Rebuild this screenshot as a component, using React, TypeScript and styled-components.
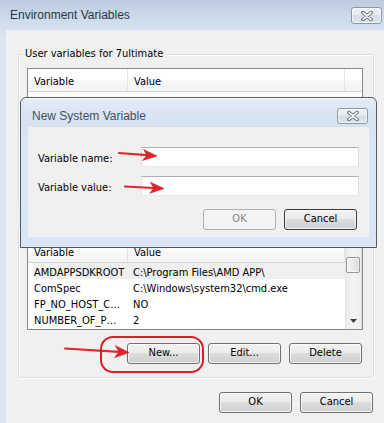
import React from "react";
import styled, { createGlobalStyle, css } from "styled-components";

const UI_FONT = `"DejaVu Sans Condensed", "Liberation Sans", Arial, sans-serif`;
const CAPTION_FONT = `"Liberation Sans", Arial, sans-serif`;

const GlobalStyle = createGlobalStyle`
  html, body { margin: 0; padding: 0; background: #dbe6f4; }
  body { font-family: ${UI_FONT}; font-size: 11px; }
  * { box-sizing: border-box; }
`;

const Window = styled.div`
  position: relative;
  width: 384px;
  height: 423px;
  overflow: hidden;
  background: linear-gradient(180deg, #bccbde 0px, #c9d7e7 14px, #d6e2f1 30px, #dbe6f4 40px);
  font-family: ${UI_FONT};
  font-size: 11px;
  color: #000;
`;

const TitleBar = styled.div`
  height: 30px;
  display: flex;
  justify-content: space-between;
  align-items: flex-start;
  padding: 0 2px 0 10px;
`;

const Caption = styled.div<{ $dialog?: boolean }>`
  font-family: ${CAPTION_FONT};
  font-size: 12px;
  line-height: 15px;
  margin-top: ${(p) => (p.$dialog ? 11 : 8)}px;
  color: ${(p) => (p.$dialog ? "#45505c" : "#273646")};
`;

const CloseBtn = styled.div<{ $h: number; $mt: number }>`
  width: 31px;
  height: ${(p) => p.$h}px;
  margin-top: ${(p) => p.$mt}px;
  border: 1px solid #8d99a9;
  border-radius: 3px;
  background: linear-gradient(180deg, #eef3f9 0%, #e2e9f2 50%, #d4dde9 50%, #dce4ef 100%);
  box-shadow: inset 0 0 0 1px rgba(255, 255, 255, 0.55);
  display: flex;
  align-items: center;
  justify-content: center;
`;

const Client = styled.div`
  margin-left: 6px;
  height: 393px;
  background: #f0f0f0;
  display: flex;
  flex-direction: column;
  padding: 24px 0 0 12px;
`;

const Group = styled.div<{ $h: number; $mt: number }>`
  position: relative;
  width: 356px;
  height: ${(p) => p.$h}px;
  margin-top: ${(p) => p.$mt}px;
  border: 1px solid #d5dfe5;
  border-radius: 3px;
  box-shadow: inset 1px 1px 0 #ffffff, 1px 1px 0 #ffffff;
  padding: 13px 10px 0 8px;
  display: flex;
  flex-direction: column;
`;

const GroupLabel = styled.span`
  position: absolute;
  top: -9px;
  left: 4px;
  padding: 0 2px;
  background: #f0f0f0;
  line-height: 15px;
`;

const List = styled.div<{ $h: number }>`
  height: ${(p) => p.$h}px;
  border: 1px solid #828790;
  background: #ffffff;
  display: flex;
  flex: none;
`;

const ListMain = styled.div`
  flex: 1;
  display: flex;
  flex-direction: column;
  overflow: hidden;
`;

const Header = styled.div`
  height: 23px;
  flex: none;
  display: flex;
  background: linear-gradient(180deg, #ffffff 0%, #ffffff 50%, #f7f8fa 50%, #f2f3f5 100%);
  border-bottom: 1px solid #d5d5d5;
`;

const HeadCell = styled.div<{ $w?: number }>`
  ${(p) =>
    p.$w
      ? css`
          width: ${p.$w}px;
          flex: none;
          border-right: 1px solid #e3e4e6;
        `
      : css`
          flex: 1;
        `}
  padding: 5px 0 0 6px;
  line-height: 15px;
  white-space: nowrap;
`;

const Row = styled.div<{ $sel?: boolean }>`
  display: flex;
  flex: none;
  height: 16px;
  margin-left: 5px;
  background: ${(p) => (p.$sel ? "#efefef" : "transparent")};
  white-space: nowrap;
`;

const Cell = styled.div<{ $w?: number; $pl: number }>`
  ${(p) => (p.$w ? `width: ${p.$w}px; flex: none;` : "flex: 1;")}
  padding: 3px 0 0 ${(p) => p.$pl}px;
  line-height: 14px;
  overflow: hidden;
`;

const ScrollBar = styled.div`
  width: 17px;
  flex: none;
  display: flex;
  flex-direction: column;
  background: linear-gradient(90deg, #e2e2e2 0, #ececec 2px, #f4f4f4 8px, #efefef 14px, #e4e4e4 17px);
`;

const ScrollArrow = styled.div`
  height: 17px;
  flex: none;
  display: flex;
  align-items: center;
  justify-content: center;
`;

const ScrollThumb = styled.div`
  height: 16px;
  flex: none;
  margin: 0 2px 0 1px;
  border: 1px solid #979797;
  border-radius: 2px;
  background: linear-gradient(90deg, #f3f3f3 0%, #e9e9e9 50%, #dadada 100%);
  box-shadow: inset 0 0 0 1px rgba(255, 255, 255, 0.6);
`;

const ScrollTrack = styled.div`
  flex: 1;
`;

const ButtonRow = styled.div<{ $mt: number; $pr: number }>`
  display: flex;
  justify-content: flex-end;
  gap: 8px;
  margin-top: ${(p) => p.$mt}px;
  padding-right: ${(p) => p.$pr}px;
`;

type BtnKind = "normal" | "default" | "disabled";

const Button = styled.div<{ $kind?: BtnKind }>`
  width: 73px;
  height: 21px;
  border-radius: 3px;
  display: flex;
  align-items: center;
  justify-content: center;
  line-height: 14px;
  padding-bottom: 1px;
  ${(p) =>
    p.$kind === "disabled"
      ? css`
          border: 1px solid #adb2b5;
          background: #f4f4f4;
          color: #838383;
        `
      : css`
          border: 1px solid ${p.$kind === "default" ? "#3a3a3a" : "#707070"};
          background: linear-gradient(180deg, #f2f2f2 0%, #ebebeb 50%, #dddddd 50%, #cfcfcf 100%);
          box-shadow: inset 0 0 0 1px rgba(255, 255, 255, 0.7);
          color: #000;
        `}
`;

const Dialog = styled.div`
  position: absolute;
  left: 20px;
  top: 97px;
  width: 357px;
  height: 151px;
  border: 1px solid #555a60;
  border-radius: 6px 6px 0 0;
  background: linear-gradient(180deg, #e4edf7 0px, #dae6f3 14px, #d5e2f0 29px, #d9e6f4 40px);
  box-shadow: inset 0 1px 0 rgba(255, 255, 255, 0.7);
  display: flex;
  flex-direction: column;
`;

const DialogTitle = styled.div`
  height: 29px;
  flex: none;
  display: flex;
  justify-content: space-between;
  align-items: flex-start;
  padding: 0 8px 0 11px;
`;

const DialogBody = styled.div`
  height: 110px;
  margin: 0 7px;
  background: #f0f0f0;
  display: flex;
  flex-direction: column;
  padding: 20px 10px 0 10px;
`;

const FormRow = styled.div<{ $mt?: number }>`
  display: flex;
  align-items: center;
  margin-top: ${(p) => p.$mt ?? 0}px;
`;

const FieldLabel = styled.label`
  width: 103px;
  flex: none;
  padding-top: 3px;
  line-height: 14px;
`;

const TextBox = styled.div`
  width: 218px;
  height: 20px;
  background: #ffffff;
  border: 1px solid;
  border-color: #abadb3 #dbdfe6 #e3e9ef #e2e3ea;
`;

const Overlay = styled.svg`
  position: absolute;
  left: 0;
  top: 0;
  pointer-events: none;
`;

const XIcon: React.FC = () => (
  <svg width="12" height="10" viewBox="0 0 12 10">
    <path d="M2 1.5 L10 8.5 M10 1.5 L2 8.5" stroke="#58626f" strokeWidth="3.6" strokeLinecap="round" />
    <path d="M2 1.5 L10 8.5 M10 1.5 L2 8.5" stroke="#ffffff" strokeWidth="1.7" strokeLinecap="round" />
  </svg>
);

const DownGlyph: React.FC = () => (
  <svg width="7" height="4" viewBox="0 0 7 4">
    <polygon points="0,0 7,0 3.5,4" fill="#404040" />
  </svg>
);

const RedArrow: React.FC<{ x1: number; y1: number; x2: number; y2: number; len?: number; w?: number }> = ({
  x1,
  y1,
  x2,
  y2,
  len = 14,
  w = 5.5,
}) => {
  const a = Math.atan2(y2 - y1, x2 - x1);
  const dx = Math.cos(a);
  const dy = Math.sin(a);
  const px = -dy;
  const py = dx;
  const bx = x2 - dx * len;
  const by = y2 - dy * len;
  const nx = x2 - dx * len * 0.72;
  const ny = y2 - dy * len * 0.72;
  const head = [
    `${x2},${y2}`,
    `${bx + px * w},${by + py * w}`,
    `${nx},${ny}`,
    `${bx - px * w},${by - py * w}`,
  ].join(" ");
  return (
    <g>
      <line x1={x1} y1={y1} x2={nx} y2={ny} stroke="#e3262c" strokeWidth="2.2" strokeLinecap="round" />
      <polygon points={head} fill="#e0242a" stroke="#c81a20" strokeWidth="0.6" strokeLinejoin="round" />
    </g>
  );
};

type VarRow = { name: string; value: string };

const ListView: React.FC<{ h: number; rows: VarRow[]; selected?: number; scroll?: boolean }> = ({
  h,
  rows,
  selected,
  scroll,
}) => (
  <List $h={h}>
    <ListMain>
      <Header>
        <HeadCell $w={100}>Variable</HeadCell>
        <HeadCell $w={217}>Value</HeadCell>
        <HeadCell />
      </Header>
      {rows.map((r, i) => (
        <Row key={r.name} $sel={i === selected}>
          <Cell $w={95} $pl={1}>
            {r.name}
          </Cell>
          <Cell $pl={5}>{r.value}</Cell>
        </Row>
      ))}
    </ListMain>
    {scroll && (
      <ScrollBar>
        <ScrollArrow />
        <ScrollThumb />
        <ScrollTrack />
        <ScrollArrow>
          <DownGlyph />
        </ScrollArrow>
      </ScrollBar>
    )}
  </List>
);

const systemRows: VarRow[] = [
  { name: "AMDAPPSDKROOT", value: "C:\\Program Files\\AMD APP\\" },
  { name: "ComSpec", value: "C:\\Windows\\system32\\cmd.exe" },
  { name: "FP_NO_HOST_C…", value: "NO" },
  { name: "NUMBER_OF_P…", value: "2" },
];

export default function App() {
  return (
    <>
      <GlobalStyle />
      <Window>
        <TitleBar>
          <Caption>Environment Variables</Caption>
          <CloseBtn $h={17} $mt={7}>
            <XIcon />
          </CloseBtn>
        </TitleBar>
        <Client>
          <Group $h={155} $mt={0}>
            <GroupLabel>User variables for 7ultimate</GroupLabel>
            <ListView h={93} rows={[]} />
          </Group>
          <Group $h={153} $mt={16}>
            <ListView h={91} rows={systemRows} selected={0} scroll />
            <ButtonRow $mt={13} $pr={1}>
              <Button>New...</Button>
              <Button>Edit...</Button>
              <Button>Delete</Button>
            </ButtonRow>
          </Group>
          <ButtonRow $mt={14} $pr={11}>
            <Button>OK</Button>
            <Button>Cancel</Button>
          </ButtonRow>
        </Client>

        <Dialog>
          <DialogTitle>
            <Caption $dialog>New System Variable</Caption>
            <CloseBtn $h={16} $mt={10}>
              <XIcon />
            </CloseBtn>
          </DialogTitle>
          <DialogBody>
            <FormRow>
              <FieldLabel>Variable name:</FieldLabel>
              <TextBox />
            </FormRow>
            <FormRow $mt={9}>
              <FieldLabel>Variable value:</FieldLabel>
              <TextBox />
            </FormRow>
            <ButtonRow $mt={13} $pr={2}>
              <Button $kind="disabled">OK</Button>
              <Button $kind="default">Cancel</Button>
            </ButtonRow>
          </DialogBody>
        </Dialog>

        <Overlay width="384" height="423" viewBox="0 0 384 423">
          <RedArrow x1={119} y1={153} x2={157} y2={156} />
          <RedArrow x1={125} y1={186.5} x2={164} y2={188.5} />
          <RedArrow x1={65} y1={348.5} x2={129} y2={352.5} len={14} w={6} />
          <rect x={101} y={337} width={102} height={35} rx={12} ry={12} fill="none" stroke="#dc1f27" strokeWidth="2" />
        </Overlay>
      </Window>
    </>
  );
}
